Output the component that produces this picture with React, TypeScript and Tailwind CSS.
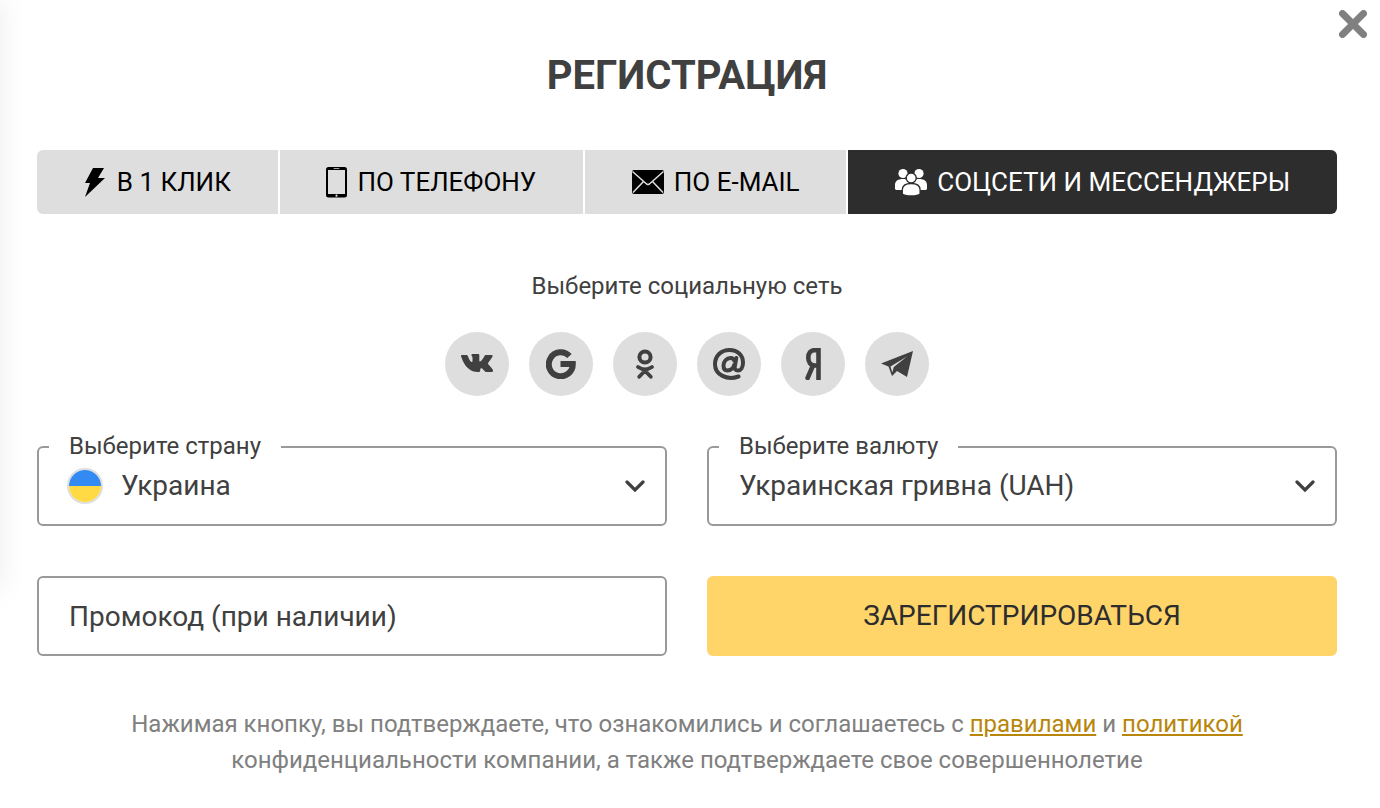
import { useState } from "react";
import type { ReactNode } from "react";

const BoltIcon = () => (
    <svg viewBox="0 0 23 32" className="h-8 w-[23px] shrink-0" fill="currentColor" aria-hidden="true">
        <path d="M9 2h11l-6 10h7L1 31l5-14H1z" />
    </svg>
);

const PhoneIcon = () => (
    <svg viewBox="0 0 21 32" className="h-8 w-[21px] shrink-0" aria-hidden="true">
        <rect x="0" y="1" width="21" height="30.500" rx="2.500" fill="currentColor" />
        <rect x="2" y="4" width="17" height="24" fill="#dedede" />
        <rect x="7.500" y="2.200" width="6" height="0.800" rx="0.400" fill="#dedede" />
        <circle cx="10.500" cy="29.700" r="1.100" fill="#dedede" />
    </svg>
);

const MailIcon = () => (
    <svg viewBox="0 0 32 24" className="h-6 w-8 shrink-0" aria-hidden="true">
        <rect width="32" height="24" rx="2" fill="currentColor" />
        <path
            d="M0.500 1.500 14 13.500q2 2 4 0L31.500 1.500M1 22.500 11.500 11.500M31 22.500 20.500 11.500"
            fill="none"
            stroke="#dedede"
            strokeWidth="1.500"
        />
    </svg>
);

const PeopleIcon = () => (
    <svg viewBox="0 0 32 28" className="h-7 w-8 shrink-0" fill="currentColor" aria-hidden="true">
        <circle cx="8" cy="5.500" r="4.600" />
        <circle cx="24" cy="5.500" r="4.600" />
        <path d="M0 21v-4c0-4 3-6 8-6s8 2 8 6v5H5c-3 0-5 0-5-1zM32 21v-4c0-4-3-6-8-6s-8 2-8 6v5h11c3 0 5 0 5-1z" />
        <g stroke="#2d2d2d" strokeWidth="1.300">
            <path d="M7.300 26v-4c0-4.500 3-6.500 8.900-6.500s8.900 2 8.900 6.500v4c-1.500 1.500-4.500 2-8.900 2s-7.400-.5-8.900-2z" />
            <circle cx="16.200" cy="10" r="5" />
        </g>
    </svg>
);

const VkIcon = () => (
    <svg viewBox="0 0 32 20" className="h-5 w-8" fill="currentColor" aria-hidden="true">
        <path d="M0 2c0-.6.4-1 1-1h4.500c.7 0 1 .3 1.300 1C8 5 9.500 8 10.700 8c.6 0 .8-.5.8-1.500V3.700c0-1.600-1.100-1.700-1.100-2.500 0-.6.5-1.200 1.300-1.200h5.400c.9 0 1.200.5 1.200 1.400v5c0 .8.3 1.100.7 1.100C20.200 7.500 22.500 4 23.500 2c.3-.7.7-1 1.500-1h5.500c1 0 1.300.6 1 1.400-.7 2-4.500 6-4.500 7 0 1.100 4.500 4.600 5 6.800.3 1-.3 1.800-1.300 1.800h-5.200c-1.900 0-3.600-3.800-5.100-3.800-.9 0-1.100.5-1.100 1.500 0 1.600-.5 2.300-2 2.300C8 18 3.500 12 .4 3.300 0 2.600 0 2.200 0 2z" />
    </svg>
);

const GoogleIcon = () => (
    <svg viewBox="0 0 30 30" className="h-[30px] w-[30px]" fill="none" aria-hidden="true">
        <path d="M23.500 7A12 12 0 1 0 26.800 15H14.500" stroke="currentColor" strokeWidth="6" />
    </svg>
);

const OkIcon = () => (
    <svg viewBox="0 0 20 32" className="h-8 w-5" fill="none" stroke="currentColor" aria-hidden="true">
        <circle cx="10" cy="9" r="5.600" strokeWidth="4" />
        <path
            d="M3 19c4.500 3 9.500 3 14 0M10 22.800l-5.800 6M10 22.800l5.800 6"
            strokeWidth="3.800"
            strokeLinecap="round"
        />
    </svg>
);

const AtIcon = () => (
    <svg viewBox="0 0 32 32" className="h-8 w-8" fill="none" stroke="currentColor" aria-hidden="true">
        <path
            d="M25.500 28.500C14 32.500 2 27 2 16.200 2 8 8 2 16.500 2 24.500 2 30 7 30 14.500c0 5-2.200 8-5 8-2.700 0-3.700-1.500-3.200-4.200L23.300 10"
            strokeWidth="4"
            strokeLinecap="round"
            strokeLinejoin="round"
        />
        <path d="M21.800 14c-.5-3-2-4-4.300-4-4 0-7 3.500-7 7.500 0 3.200 1.500 5 4 5 3.500 0 6.300-3 7-6.500" strokeWidth="4" />
    </svg>
);

const YandexIcon = () => (
    <svg viewBox="0 0 16 32" className="h-8 w-4" fill="none" stroke="currentColor" aria-hidden="true">
        <path d="M13.500 32V2.200H9.500C5.500 2.200 3.300 5 3.300 9.500s2.200 8 6.200 8h4" strokeWidth="4.600" />
        <path d="M8 17.500 2.600 30" strokeWidth="4.600" strokeLinecap="round" />
    </svg>
);

const TelegramIcon = () => (
    <svg viewBox="0 0 32 28" className="h-7 w-8" fill="currentColor" aria-hidden="true">
        <path d="M32 1 0 13.500 7.500 16.500 11 26l5-5 10 6z" />
        <path d="M26 6.500 9.500 16.500l1.800 6 1.500-5.500z" fill="#dedede" />
    </svg>
);

const CloseIcon = () => (
    <svg viewBox="0 0 28 28" className="h-7 w-7" fill="none" aria-hidden="true">
        <path d="M3.500 3.500l21 21M24.500 3.500l-21 21" stroke="currentColor" strokeWidth="7" strokeLinecap="round" />
    </svg>
);

const ChevronIcon = () => (
    <svg viewBox="0 0 20 12" className="pointer-events-none -ml-5 h-3 w-5 shrink-0" fill="none" aria-hidden="true">
        <path d="M2 2l8 8 8-8" stroke="currentColor" strokeWidth="3.200" strokeLinecap="round" />
    </svg>
);

const FlagIcon = () => (
    <span className="flex h-9 w-9 shrink-0 flex-col overflow-hidden rounded-full border-2 border-[#dedede]">
        <span className="flex-1 bg-[#338af3]" />
        <span className="flex-1 bg-[#ffda44]" />
    </span>
);

const tabs = [
    { id: "click", label: "В 1 КЛИК", icon: <BoltIcon /> },
    { id: "phone", label: "ПО ТЕЛЕФОНУ", icon: <PhoneIcon /> },
    { id: "email", label: "ПО E-MAIL", icon: <MailIcon /> },
    { id: "social", label: "СОЦСЕТИ И МЕССЕНДЖЕРЫ", icon: <PeopleIcon /> },
];

const networks = [
    { name: "ВКонтакте", icon: <VkIcon /> },
    { name: "Google", icon: <GoogleIcon /> },
    { name: "Одноклассники", icon: <OkIcon /> },
    { name: "Mail.ru", icon: <AtIcon /> },
    { name: "Яндекс", icon: <YandexIcon /> },
    { name: "Telegram", icon: <TelegramIcon /> },
];

type SelectFieldProps = {
    id: string;
    label: string;
    option: string;
    icon?: ReactNode;
};

const SelectField = ({ id, label, option, icon }: SelectFieldProps) => (
    <fieldset className="min-w-0 rounded-md border-2 border-[#999] px-2.5 pb-[13px]">
        <legend className="px-5 pb-0.5 text-2xl leading-[26px]">
            <label htmlFor={id}>{label}</label>
        </legend>
        <div className={`flex h-[50px] items-center gap-[18px] pr-2.5 ${icon ? "pl-[18px]" : "pl-5"}`}>
            {icon}
            <select id={id} className="h-full min-w-0 flex-1 appearance-none bg-transparent text-[28px]">
                <option>{option}</option>
            </select>
            <ChevronIcon />
        </div>
    </fieldset>
);

const App = () => {
    const [activeTab, setActiveTab] = useState("social");
    const [promo, setPromo] = useState("");

    return (
        <div className="relative overflow-hidden bg-white pt-[52px] pr-[43px] pb-[30px] pl-[37px] font-['Roboto',sans-serif] text-[#404040]">
            {/* Shadow of the neighbouring panel */}
            <div className="absolute top-0 right-full h-[590px] w-10 shadow-[0_0_30px_rgba(0,0,0,0.08)]" />

            <button type="button" aria-label="Закрыть" className="absolute top-2.5 right-[13px] text-[#808080]">
                <CloseIcon />
            </button>

            <h1 className="text-center text-[40px] leading-[48px] font-bold">РЕГИСТРАЦИЯ</h1>

            {/* Registration methods */}
            <div className="mt-[50px] flex gap-0.5 overflow-hidden rounded-md">
                {tabs.map((tab) => (
                    <button
                        key={tab.id}
                        type="button"
                        onClick={() => setActiveTab(tab.id)}
                        className={`flex h-16 flex-auto items-center justify-center gap-2.5 text-[26px] whitespace-nowrap ${
                            activeTab === tab.id ? "bg-[#2d2d2d] text-white" : "bg-[#dedede] text-black"
                        }`}
                    >
                        {tab.icon}
                        {tab.label}
                    </button>
                ))}
            </div>

            {/* Social networks */}
            <p className="mt-[54px] text-center text-2xl leading-9">Выберите социальную сеть</p>
            <div className="mt-7 flex justify-center gap-5">
                {networks.map((network) => (
                    <button
                        key={network.name}
                        type="button"
                        aria-label={network.name}
                        className="flex h-16 w-16 items-center justify-center rounded-full bg-[#dedede]"
                    >
                        {network.icon}
                    </button>
                ))}
            </div>

            <form onSubmit={(e) => e.preventDefault()} className="mt-[37px] grid grid-cols-2 gap-x-10 gap-y-[50px]">
                <SelectField id="country" label="Выберите страну" option="Украина" icon={<FlagIcon />} />
                <SelectField id="currency" label="Выберите валюту" option="Украинская гривна (UAH)" />
                <input
                    type="text"
                    aria-label="Промокод (при наличии)"
                    placeholder="Промокод (при наличии)"
                    value={promo}
                    onChange={(e) => setPromo(e.target.value)}
                    className="h-20 min-w-0 rounded-md border-2 border-[#999] px-[30px] text-[28px] placeholder:text-[#404040]"
                />
                <button type="submit" className="h-20 rounded-md bg-[#ffd56a] text-[28px] text-[#2d2d2d]">
                    ЗАРЕГИСТРИРОВАТЬСЯ
                </button>
            </form>

            <p className="mt-[50px] text-center text-2xl leading-9 text-[#808080]">
                Нажимая кнопку, вы подтверждаете, что ознакомились и соглашаетесь с{" "}
                <a href="#rules" className="text-[#b8860b] underline">
                    правилами
                </a>{" "}
                и{" "}
                <a href="#privacy" className="text-[#b8860b] underline">
                    политикой
                </a>{" "}
                конфиденциальности компании, а также подтверждаете свое совершеннолетие
            </p>
        </div>
    );
};

export default App;
